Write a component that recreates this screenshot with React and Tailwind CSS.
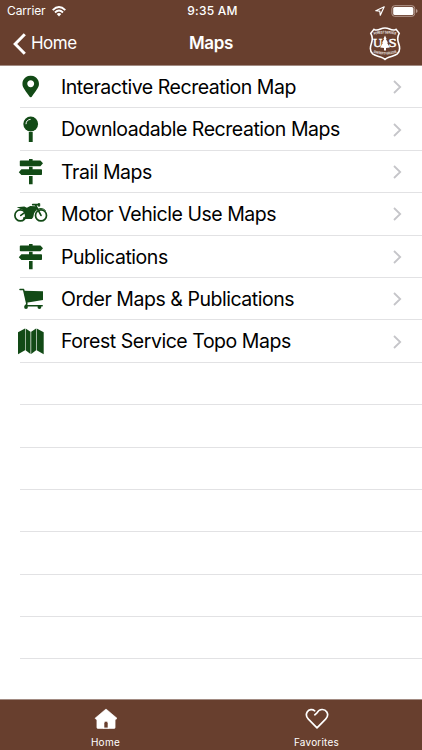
import { FaMapMarkerAlt } from "react-icons/fa";

const PinIcon = () => (
  <svg className="w-[34px] h-[30px]" viewBox="0 0 34 30" fill="currentColor">
    <circle cx="16.7" cy="9" r="7.4" />
    <rect x="14.8" y="17" width="3.9" height="10" />
    <path d="M12 8.8a4.6 4.6 0 0 1 4.2-4.4" fill="none" stroke="#fff" strokeWidth="1" strokeLinecap="round" />
  </svg>
);

const MarkerIcon = () => <FaMapMarkerAlt className="w-[34px] h-[22px] -translate-x-[0.3px] -translate-y-[0.5px]" />;

const SignIcon = () => (
  <svg className="w-[34px] h-[30px]" viewBox="0 0 34 30" fill="currentColor">
    <path d="M15 1.9h3.6v2H15zM15 9.7h3.6v3.2H15zM15 18.9h3.6v8.3H15z" />
    <path d="M6.6 3.4h19.8l2.6 2.9-2.6 2.9H6.6a.8.8 0 0 1-.8-.8V4.2a.8.8 0 0 1 .8-.8z" />
    <path d="M27.2 12.3H7.4l-2.6 2.9 2.6 2.9h19.8a.8.8 0 0 0 .8-.8v-4.2a.8.8 0 0 0-.8-.8z" />
  </svg>
);

const MotorcycleIcon = () => (
  <svg className="w-[34px] h-[30px]" viewBox="0 0 34 30" fill="none" stroke="currentColor">
    <circle cx="6.4" cy="16.4" r="5.5" strokeWidth="1.7" />
    <circle cx="27" cy="16.4" r="5.5" strokeWidth="1.7" />
    <path d="M6.8 16.4l5.5-4M18.7 5.6h6M21.4 5.8L27 16.4" strokeWidth="1.7" strokeLinecap="round" />
    <path d="M24.2 4.6h1.6v2.6h-1.6z" fill="currentColor" strokeWidth=".7" />
    <path
      d="M2.7 8.2l7.6-.7 2.6 1.2 3.3-1.6 5.3.2 2 2.2-3.4 4.8-.9 4-1.4 1.7H9.2l-.2-1.5 2-.6-.4-4.6-1.6-2.3z"
      fill="currentColor"
      stroke="none"
    />
    <path d="M22.2 11.2q5-3.6 9.4.4" strokeWidth="1" />
  </svg>
);

const CartIcon = () => (
  <svg className="w-[34px] h-[30px]" viewBox="0 0 34 30" fill="currentColor">
    <path d="M9.8 6.8l19.2.4v8.9l-16.6 2.6z" />
    <path
      d="M6 5.6h3.6l3.3 14.4-1.3 1.8h16.6"
      fill="none"
      stroke="currentColor"
      strokeWidth="1.5"
      strokeLinejoin="round"
      strokeLinecap="round"
    />
    <circle cx="12" cy="23" r="1.9" />
    <circle cx="25.4" cy="23" r="1.9" />
  </svg>
);

const FoldedMapIcon = () => (
  <svg className="w-[34px] h-[30px]" viewBox="0 0 34 30" fill="currentColor">
    <path d="M4 5.2l7-3.7v21.7l-7 4z" />
    <path d="M11.6 1.5l4.9 3.2v22.2l-4.9-3.7z" />
    <path d="M17.2 4.7l4.9-3.2v21.7l-4.9 3.7z" />
    <path d="M22.7 1.5l7 3.7v22l-7-4z" />
  </svg>
);

const ShieldLogo = () => (
  <svg className="w-8 h-[34px]" viewBox="0 0 32 34" fill="none">
    <path
      d="M5 2.3C7.3 3.8 9.3 3.1 11.5 2c3-1.3 6-1.3 9 0 2.2 1.1 4.2 1.8 6.5.3l3.2 4c-2.1 3.7-1.9 6.6-.6 10.1 1.5 4.1 1.3 8.1-1.3 10.4-2.1 1.7-5.2 2.2-7.9 3.3-1.9.7-3.3 1.4-4.4 2.3-1.1-.9-2.5-1.6-4.4-2.3-2.7-1.1-5.8-1.6-7.9-3.3-2.6-2.3-2.8-6.3-1.3-10.4 1.3-3.5 1.5-6.4-.6-10.1z"
      stroke="#fff"
      strokeWidth="1.6"
    />
    <path id="logoTop" d="M5 7.8Q16 5.2 27 7.8" />
    <path id="logoBottom" d="M4.4 25.6Q16 29.4 27.6 25.6" />
    <g fill="#fff" fontFamily="Liberation Sans, sans-serif" fontWeight="700">
      <text fontSize="3.8" textLength="22" lengthAdjust="spacingAndGlyphs">
        <textPath href="#logoTop">FOREST SERVICE</textPath>
      </text>
      <text fontSize="3.6" textLength="23.6" lengthAdjust="spacingAndGlyphs">
        <textPath href="#logoBottom">DEPARTMENT OF AGRICULTURE</textPath>
      </text>
    </g>
    <g fill="#fff" stroke="#fff" strokeWidth=".4" fontFamily="Liberation Serif, serif" fontSize="12">
      <text x="4" y="19.6" textLength="9.3" lengthAdjust="spacingAndGlyphs">U</text>
      <text x="19.6" y="19.6" textLength="8.2" lengthAdjust="spacingAndGlyphs">S</text>
    </g>
    <path d="M16 8.4l1.6 3.6-.7-.1 2.1 3.9-.9-.1 2.7 4.7-3.8.5v2.6h-2v-2.6l-3.8-.5 2.7-4.7-.9.1 2.1-3.9-.7.1z" fill="#fff" />
  </svg>
);

const items = [
  { label: "Interactive Recreation Map", Icon: MarkerIcon },
  { label: "Downloadable Recreation Maps", Icon: PinIcon },
  { label: "Trail Maps", Icon: SignIcon },
  { label: "Motor Vehicle Use Maps", Icon: MotorcycleIcon },
  { label: "Publications", Icon: SignIcon },
  { label: "Order Maps & Publications", Icon: CartIcon },
  { label: "Forest Service Topo Maps", Icon: FoldedMapIcon },
];

const emptyRows = [1, 2, 3, 4, 5, 6, 7];

function StatusBar() {
  return (
    <div className="h-[22px] grid grid-cols-3 items-center pl-[7px] pr-1 text-xs">
      <div className="flex items-center gap-[6px]">
        <span className="tracking-[-0.01em]">Carrier</span>
        <svg className="w-[14px] h-[11px]" viewBox="0 0 14 11" fill="none" stroke="#fff" strokeWidth="1.9">
          <path d="M.7 4.1Q7-1.9 13.3 4.1M3 6.5q4-3.8 8 0" />
          <path d="M4.7 8.1q2.3-2 4.6 0L7 10.5z" fill="#fff" stroke="none" />
        </svg>
      </div>
      <span className="text-center font-medium tracking-[0.02em]">9:35 AM</span>
      <div className="flex items-center justify-end gap-[6px]">
        <svg className="w-[10px] h-[10px]" viewBox="0 0 10 10" fill="none" stroke="#fff" strokeWidth="1.2" strokeLinejoin="round">
          <path d="M9.2.8L.8 4.7l4 .5.5 4z" />
        </svg>
        <svg className="w-[27px] h-3" viewBox="0 0 27 12" fill="none">
          <rect x=".9" y=".7" width="22.8" height="10.6" rx="2.8" stroke="#b69b90" />
          <rect x="2.2" y="2" width="20.2" height="8" rx="1.5" fill="#fff" />
          <path d="M25 4q1.6.4 1.6 2T25 8z" fill="#b69b90" />
        </svg>
      </div>
    </div>
  );
}

export default function App() {
  return (
    <div className="w-full h-screen flex flex-col overflow-hidden bg-white font-['Inter',sans-serif]">
      <header className="h-[66px] shrink-0 bg-[#683f2e] border-b border-[#a28b82] text-white">
        <StatusBar />
        <div className="h-[43px] grid grid-cols-3 items-center">
          <button className="flex items-center gap-[5px] pl-[13px] text-[17px] tracking-[-0.03em]">
            <svg className="w-[13px] h-[22px]" viewBox="0 0 13 22" fill="none" stroke="#fff" strokeWidth="3">
              <path d="M11.8 1.3L2.2 11l9.6 9.7" />
            </svg>
            Home
          </button>
          <h1 className="text-center text-[17px] font-semibold tracking-[-0.02em]">Maps</h1>
          <div className="flex justify-end pr-[21px]">
            <ShieldLogo />
          </div>
        </div>
      </header>

      <main className="flex-1 overflow-hidden">
        {items.map(({ label, Icon }) => (
          <div key={label} className="h-[42.4px] ml-5 pt-px flex items-center border-b border-[#e2e2e4] text-[#124a16]">
            <div className="-ml-[6px] mr-[13px]">
              <Icon />
            </div>
            <div className="flex-1 pt-px text-[19.5px] tracking-[-0.46px] text-black whitespace-nowrap">{label}</div>
            <svg className="w-[9px] h-[14px] mr-5" viewBox="0 0 9 14" fill="none" stroke="#c5c5c9" strokeWidth="1.8">
              <path d="M1 1l6.2 6L1 13" />
            </svg>
          </div>
        ))}
        {emptyRows.map((row) => (
          <div key={row} className="h-[42.4px] ml-5 border-b border-[#e2e2e4]" />
        ))}
      </main>

      <footer className="h-[51px] shrink-0 grid grid-cols-2 bg-[#683f2e] border-t border-[#a28b82] text-white text-[10px]">
        <button className="flex flex-col items-center pt-2">
          <svg className="w-6 h-[22px]" viewBox="0 0 24 22" fill="#fff">
            <path
              d="M12 1l11 9.3-1.1 1.1h-.8v8.1a1 1 0 0 1-1 1H14v-5.3a2 2 0 0 0-4 0v5.3H3.9a1 1 0 0 1-1-1v-8.1h-.8L1 10.3z"
              stroke="#fff"
              strokeWidth=".6"
              strokeLinejoin="round"
            />
            <path d="M9.5 19.6h5v1.2h-5z" />
          </svg>
          <span className="mt-[5px] tracking-[0.03em]">Home</span>
        </button>
        <button className="flex flex-col items-center pt-2">
          <svg className="w-6 h-[22px]" viewBox="0 0 24 22" fill="none" stroke="#fff" strokeWidth="1.7">
            <path
              d="M9.8 6.8L12 4.8C14.3.6 19.6.5 21.8 4c1.5 2.5.7 5.2-1.2 7.2L12 19.8l-8.6-8.6C1.5 9.2.7 6.5 2.2 4 4 1.3 7.5 1 9.7 2.8"
              strokeLinejoin="round"
              strokeLinecap="round"
            />
          </svg>
          <span className="mt-[5px] tracking-[0.02em]">Favorites</span>
        </button>
      </footer>
    </div>
  );
}
